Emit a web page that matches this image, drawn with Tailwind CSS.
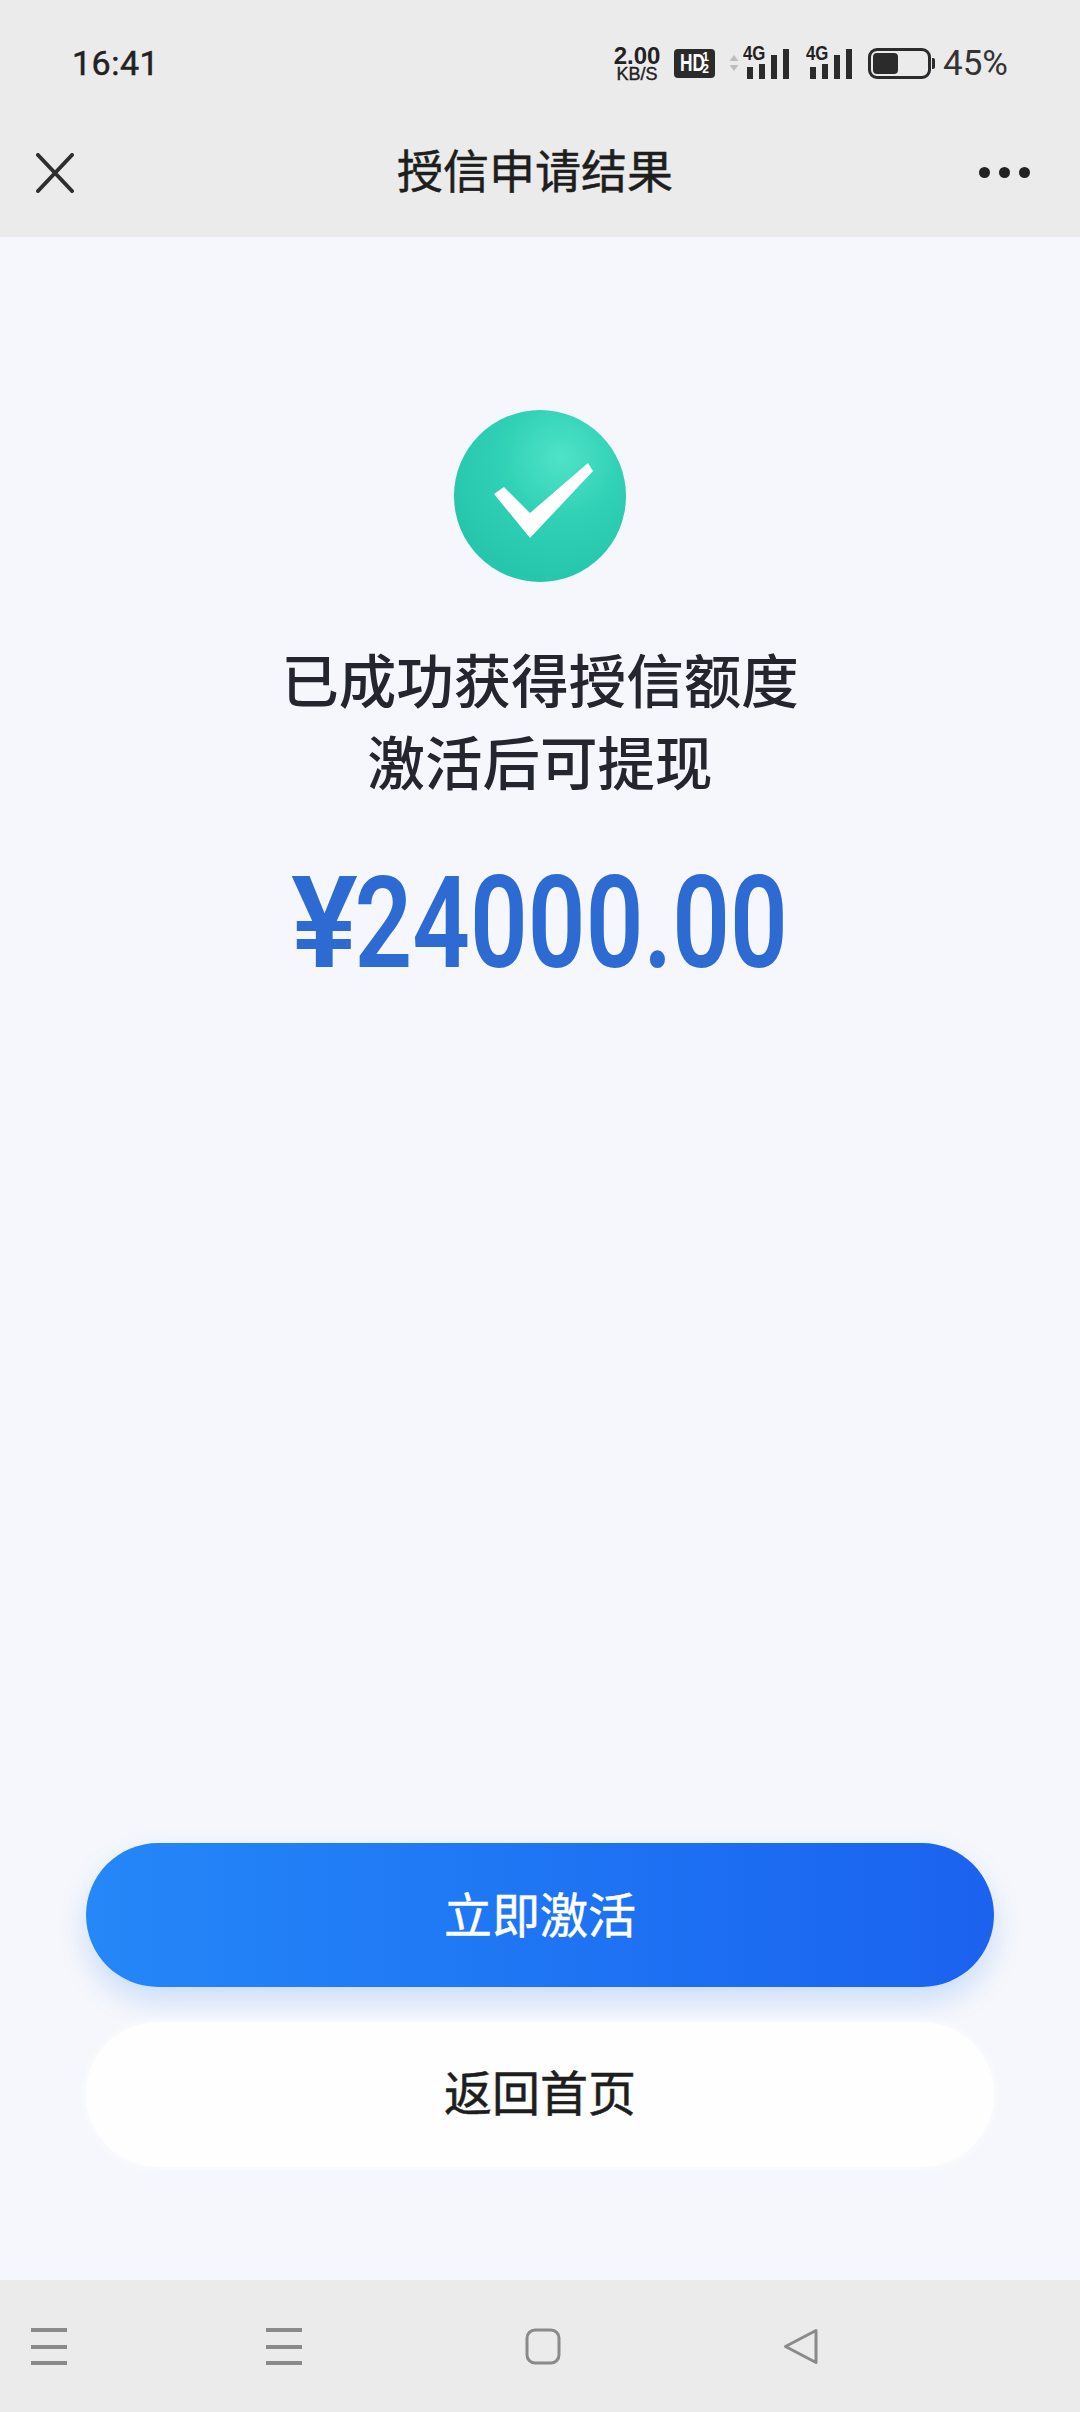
<!DOCTYPE html>
<html lang="zh-CN">

<head>
  <meta charset="UTF-8">
  <meta name="viewport" content="width=device-width, initial-scale=1">
  <title>授信申请结果</title>
  <script src="https://cdn.jsdelivr.net/npm/@tailwindcss/browser@4"></script>
</head>

<body class="font-['Roboto','Noto_Sans_CJK_SC',sans-serif] bg-[#f5f7fc]">
  <div class="w-[1080px] h-[2412px] flex flex-col overflow-hidden">

    <!-- Status bar -->
    <div class="h-[124px] shrink-0 bg-[#ebebeb] flex items-center justify-between pl-[72px] pr-[72px] pt-[2px] text-[#222]">
      <span class="text-[34px] leading-none tracking-[0.5px] [-webkit-text-stroke:0.5px_#222]">16:41</span>
      <div class="flex items-center">
        <div class="w-[52px] flex flex-col items-center font-['Liberation_Sans',sans-serif] font-bold">
          <span class="text-[24px] leading-[21px]">2.00</span>
          <span class="text-[18px] leading-[16px] font-normal [-webkit-text-stroke:0.4px_#222]">KB/S</span>
        </div>
        <!-- HD badge -->
        <div class="ml-[11px] w-[41px] h-[29px] rounded-[4px] bg-[#2b2b2b] text-white flex items-center justify-center font-['Liberation_Sans',sans-serif] font-bold">
          <span class="w-[22px] text-[24px] leading-none scale-x-[0.72] origin-left">HD</span>
          <span class="flex flex-col items-center text-[12px] leading-[12px]"><span>1</span><span>2</span></span>
        </div>
        <!-- arrows -->
        <svg class="ml-[14px]" width="10" height="16" viewBox="0 0 10 16">
          <path d="M5 0l4.500 6h-9z M5 16l4.500-6h-9z" fill="#bdbdbd" />
        </svg>
        <!-- signal 1 -->
        <div class="relative ml-[4px] w-[46px] h-[32px] flex items-end gap-[6px] pl-[4px]">
          <span class="absolute left-0 -top-[5px] text-[21px] leading-[22px] font-bold font-['Liberation_Sans',sans-serif] scale-x-[0.8] origin-left">4G</span>
          <i class="block w-[6px] h-[12px] bg-[#2b2b2b]"></i>
          <i class="block w-[6px] h-[15px] bg-[#2b2b2b]"></i>
          <i class="block w-[6px] h-[24px] bg-[#2b2b2b]"></i>
          <i class="block w-[6px] h-[30px] bg-[#2b2b2b]"></i>
        </div>
        <!-- signal 2 -->
        <div class="relative ml-[17px] w-[46px] h-[32px] flex items-end gap-[6px] pl-[4px]">
          <span class="absolute left-0 -top-[5px] text-[21px] leading-[22px] font-bold font-['Liberation_Sans',sans-serif] scale-x-[0.8] origin-left">4G</span>
          <i class="block w-[6px] h-[12px] bg-[#2b2b2b]"></i>
          <i class="block w-[6px] h-[15px] bg-[#2b2b2b]"></i>
          <i class="block w-[6px] h-[24px] bg-[#2b2b2b]"></i>
          <i class="block w-[6px] h-[30px] bg-[#2b2b2b]"></i>
        </div>
        <!-- battery -->
        <div class="ml-[16px] flex items-center">
          <div class="w-[63px] h-[31px] rounded-[9px] border-[3px] border-[#2b2b2b] p-[2px]">
            <div class="w-[25px] h-full rounded-[4px] bg-[#2b2b2b]"></div>
          </div>
          <div class="ml-[1px] w-[3px] h-[11px] rounded-r-[2px] bg-[#2b2b2b]"></div>
        </div>
        <span class="ml-[8px] text-[35px] leading-none text-[#333]">45%</span>
      </div>
    </div>

    <!-- Nav bar -->
    <div class="h-[113px] shrink-0 bg-[#ebebeb] flex items-center justify-between pl-[36px] pr-[50px] pb-[16px] relative">
      <svg width="38" height="40" viewBox="0 0 38 40" fill="none" stroke="#2e2e2e" stroke-width="4" stroke-linecap="round">
        <path d="M2 2l34 36M36 2L2 38" />
      </svg>
      <div class="text-[46px] leading-none text-[#1e1e1e] [-webkit-text-stroke:0.5px_#1e1e1e] absolute left-0 right-0 top-[25px] -ml-[10px] text-center">授信申请结果</div>
      <div class="flex gap-[9px]">
        <i class="block w-[11px] h-[11px] rounded-full bg-[#222]"></i>
        <i class="block w-[11px] h-[11px] rounded-full bg-[#222]"></i>
        <i class="block w-[11px] h-[11px] rounded-full bg-[#222]"></i>
      </div>
    </div>

    <!-- Result -->
    <div class="flex-1 flex flex-col items-center pt-[173px]">
      <div class="w-[172px] h-[172px] rounded-full bg-[radial-gradient(circle_at_62%_28%,#4fe3c8_0%,#2fd0b5_38%,#25c6ab_75%,#2ccfb5_100%)]">
        <svg width="172" height="172" viewBox="0 0 172 172">
          <path d="M40 84l10-7 26 26 58-50 5 8-63 67z" fill="#fff" />
        </svg>
      </div>
      <div class="mt-[61px] text-[57.500px] leading-[82px] font-medium text-[#23262f] text-center">
        <p>已成功获得授信额度</p>
        <p>激活后可提现</p>
      </div>
      <div class="mt-[46px] h-[140px] flex items-center pl-[7px] text-[128px] leading-none font-semibold text-[#2d6bd3] scale-x-[0.79]">
        <span class="inline-block scale-x-[1.24] mr-[4px]">¥</span><span>24000.00</span>
      </div>

      <!-- Buttons -->
      <div class="mt-auto mb-[113px] w-[908px] flex flex-col gap-[35px]">
        <button class="h-[144px] pt-[3px] rounded-full bg-gradient-to-r from-[#2587f8] to-[#1b62ef] text-white text-[48px] shadow-[0_14px_28px_rgba(60,130,240,0.22)] [-webkit-text-stroke:0.5px_#fff]">立即激活</button>
        <button class="h-[145px] rounded-full bg-[#fefefe] text-[#1e1e1e] text-[48px] shadow-[0_0_10px_rgba(255,255,255,0.9)] [-webkit-text-stroke:0.5px_#1e1e1e]">返回首页</button>
      </div>
    </div>

    <!-- System navigation -->
    <div class="h-[132px] shrink-0 bg-[#ebebeb] relative">
      <div class="h-full pl-[31px] flex items-start pt-[48px]">
        <svg width="36" height="37" viewBox="0 0 36 37" fill="#8a8a8a">
          <rect y="0" width="36" height="4" />
          <rect y="17" width="36" height="4" />
          <rect y="33" width="36" height="4" />
        </svg>
        <svg class="ml-[199px]" width="36" height="37" viewBox="0 0 36 37" fill="#8a8a8a">
          <rect y="0" width="36" height="4" />
          <rect y="17" width="36" height="4" />
          <rect y="33" width="36" height="4" />
        </svg>
        <svg class="ml-[223px]" width="36" height="37" viewBox="0 0 36 37" fill="none" stroke="#8a8a8a" stroke-width="3">
          <rect x="2" y="2" width="32" height="33" rx="8" />
        </svg>
        <svg class="ml-[222px]" width="36" height="37" viewBox="0 0 36 37" fill="none" stroke="#8a8a8a" stroke-width="3" stroke-linejoin="round">
          <path d="M33 2.500L2.500 18.500 33 34.500z" />
        </svg>
      </div>
    </div>
  </div>
</body>

</html>
